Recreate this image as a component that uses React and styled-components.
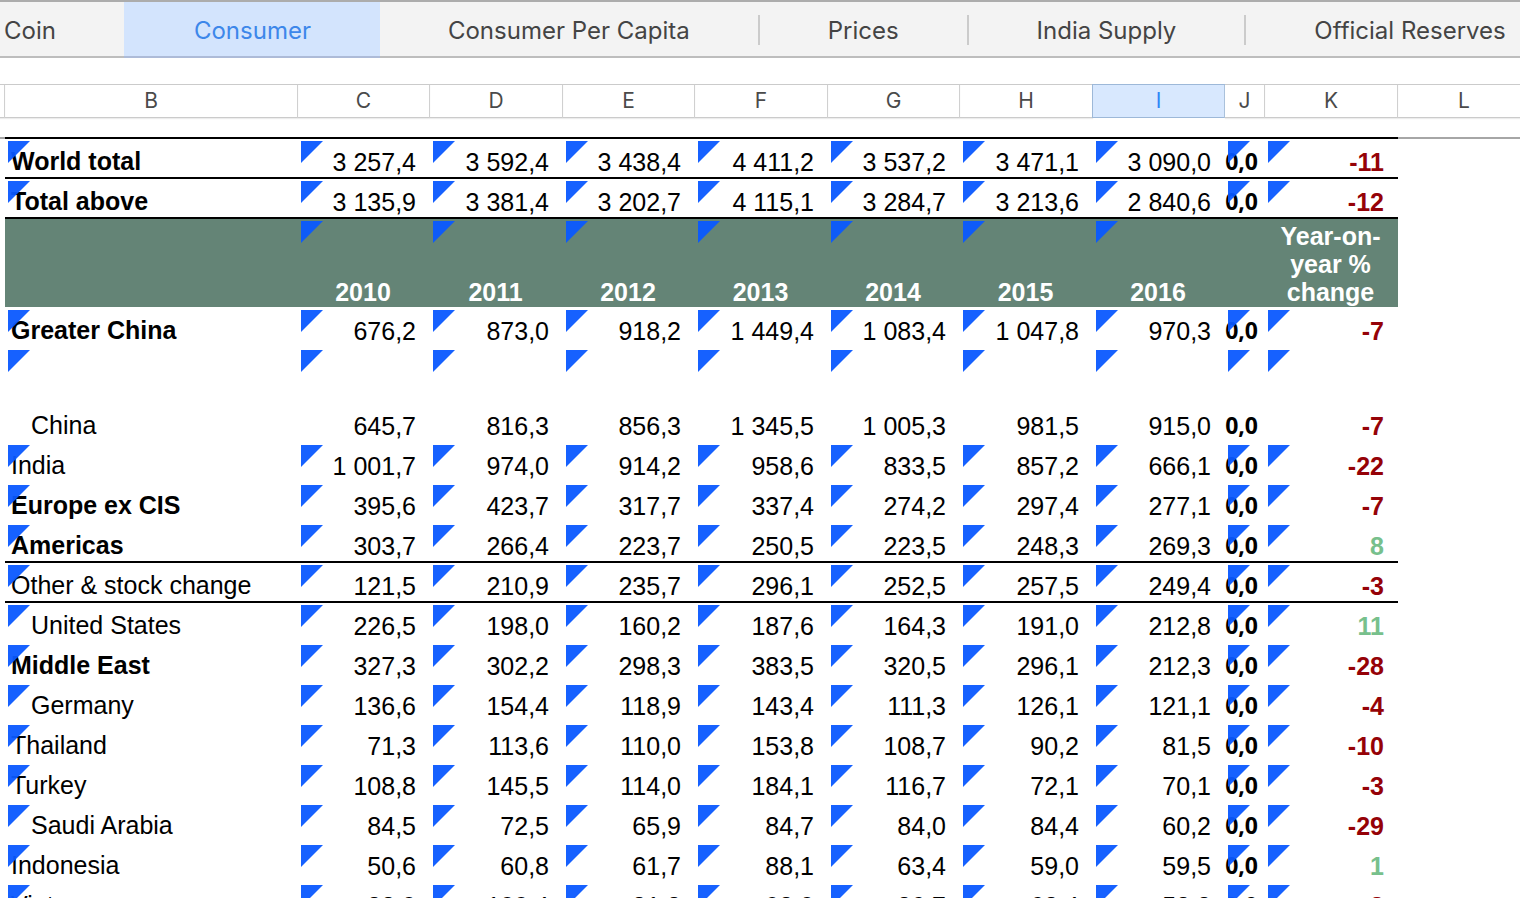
import React from "react";
import styled, { createGlobalStyle, css } from "styled-components";

const sheetFont = '"Liberation Sans", Arial, sans-serif';
const chromeFont = 'Inter, "Liberation Sans", sans-serif';

const GlobalStyle = createGlobalStyle`
  *, *::before, *::after { box-sizing: border-box; }
  html, body, #root { height: 100%; }
  body { margin: 0; background: #fff; overflow: hidden; }
`;

const Page = styled.div`
  display: flex;
  flex-direction: column;
  height: 100%;
  overflow: hidden;
`;

const TabBar = styled.nav`
  display: flex;
  flex: none;
  height: 58px;
  overflow: hidden;
  background: #f3f3f3;
  border-top: 2px solid #acacac;
  box-shadow: inset 0 -2px 0 #bdbdbd;
`;

const Tab = styled.button`
  display: flex;
  align-items: center;
  flex: none;
  height: 56px;
  margin: 0;
  padding: ${(p) => (p.$first ? "4px 68px 0 4px" : p.$active ? "4px 69px 0 70px" : "4px 68px 0")};
  border: 0;
  border-bottom: 2px solid ${(p) => (p.$active ? "#adbbd8" : "transparent")};
  background: ${(p) => (p.$active ? "#d3e4fd" : "transparent")};
  color: ${(p) => (p.$active ? "#3d87ea" : "#444")};
  font: 400 24px/50px ${chromeFont};
  white-space: nowrap;
`;

const TabDivider = styled.span`
  flex: none;
  align-self: center;
  width: 2px;
  height: 30px;
  background: #cbcbcb;
`;

const Sheet = styled.table`
  flex: none;
  width: 100%;
  min-width: 1531px;
  margin-top: 26px;
  table-layout: fixed;
  border-collapse: separate;
  border-spacing: 0;
  font: 400 25px/28px ${sheetFont};
  color: #000;
`;

const Col = styled.col`
  width: ${(p) => p.$w};
`;

const ColumnLetter = styled.th`
  height: 34px;
  padding: 0;
  border-top: 1px solid #cbcbcb;
  border-bottom: 1px solid #cbcbcb;
  border-right: 1px solid #cbcbcb;
  box-shadow: 0 1px 1px #ececec;
  color: #4a4a4a;
  font: 400 21px/32px ${chromeFont};
  text-align: center;
  ${(p) =>
    p.$active &&
    css`
      background: #d8e8fe;
      border-color: #9db8d8;
      color: #2f86f6;
      box-shadow: -1px 0 0 #9db8d8;
    `}
`;

const FreezeCell = styled.td`
  height: 21px;
  padding: 0;
  vertical-align: bottom;
  border-bottom: ${(p) => (p.$inside ? "2px solid #000" : "0")};
  box-shadow: ${(p) => (p.$inside ? "none" : "inset 0 -2px 0 #a6a6a6")};
`;

const Row = styled.tr`
  height: ${(p) => (p.$tall ? 95 : 40)}px;
`;

const cell = css`
  position: relative;
  vertical-align: bottom;
  white-space: nowrap;
  border-bottom: 2px solid ${(p) => (p.$ruled ? "#000" : "transparent")};
`;

const Label = styled.th`
  ${cell}
  padding: 0 0 2px ${(p) => (p.$indent ? 26 : 6)}px;
  text-align: left;
  font-weight: ${(p) => (p.$bold ? 700 : 400)};
`;

const Value = styled.td`
  ${cell}
  padding: 0 14px 1px 0;
  text-align: right;
`;

const Zero = styled.td`
  ${cell}
  padding: 0 7px 2px 0;
  text-align: right;
  font-family: "Open Sans", ${sheetFont};
  font-size: 23px;
  font-weight: 700;
`;

const Change = styled.td`
  ${cell}
  padding: 0 14px 1px 0;
  text-align: right;
  font-weight: 700;
  color: ${(p) => (p.$up ? "#77c08c" : "#950207")};
`;

const YearCell = styled.th`
  position: relative;
  height: 89px;
  padding: 0 2px 1px 0;
  vertical-align: bottom;
  text-align: center;
  background: #648476;
  border-bottom: 1px solid #fff;
  color: #fff;
  font-weight: 700;
`;

const Flag = styled.span`
  position: absolute;
  top: 2px;
  left: 3px;
  width: 22px;
  height: 22px;
  background: #0a59ff;
  opacity: 0.95;
  clip-path: polygon(0 0, 100% 0, 0 100%);
`;

const tabs = ["Coin", "Consumer", "Consumer Per Capita", "Prices", "India Supply", "Official Reserves"];
const letters = ["B", "C", "D", "E", "F", "G", "H", "I", "J", "K"];
const widths = ["5px", "293px", "132px", "133px", "132px", "133px", "132px", "133px", "132px", "40px", "133px", "auto"];
const years = ["2010", "2011", "2012", "2013", "2014", "2015", "2016"];

const totals = [
  { name: "World total", bold: true, ruled: true, v: "3 257,4|3 592,4|3 438,4|4 411,2|3 537,2|3 471,1|3 090,0", c: "-11" },
  { name: "Total above", bold: true, ruled: true, v: "3 135,9|3 381,4|3 202,7|4 115,1|3 284,7|3 213,6|2 840,6", c: "-12" },
];

const countries = [
  { name: "Greater China", bold: true, v: "676,2|873,0|918,2|1 449,4|1 083,4|1 047,8|970,3", c: "-7" },
  { name: "China", indent: true, tall: true, v: "645,7|816,3|856,3|1 345,5|1 005,3|981,5|915,0", c: "-7" },
  { name: "India", v: "1 001,7|974,0|914,2|958,6|833,5|857,2|666,1", c: "-22" },
  { name: "Europe ex CIS", bold: true, v: "395,6|423,7|317,7|337,4|274,2|297,4|277,1", c: "-7" },
  { name: "Americas", bold: true, ruled: true, v: "303,7|266,4|223,7|250,5|223,5|248,3|269,3", c: "8" },
  { name: "Other & stock change", ruled: true, v: "121,5|210,9|235,7|296,1|252,5|257,5|249,4", c: "-3" },
  { name: "United States", indent: true, v: "226,5|198,0|160,2|187,6|164,3|191,0|212,8", c: "11" },
  { name: "Middle East", bold: true, v: "327,3|302,2|298,3|383,5|320,5|296,1|212,3", c: "-28" },
  { name: "Germany", indent: true, v: "136,6|154,4|118,9|143,4|111,3|126,1|121,1", c: "-4" },
  { name: "Thailand", v: "71,3|113,6|110,0|153,8|108,7|90,2|81,5", c: "-10" },
  { name: "Turkey", v: "108,8|145,5|114,0|184,1|116,7|72,1|70,1", c: "-3" },
  { name: "Saudi Arabia", indent: true, v: "84,5|72,5|65,9|84,7|84,0|84,4|60,2", c: "-29" },
  { name: "Indonesia", v: "50,6|60,8|61,7|88,1|63,4|59,0|59,5", c: "1" },
  { name: "Vietnam", v: "82,0|100,4|81,8|98,0|86,7|63,4|58,2", c: "-8" },
];

function DataRow({ row }) {
  return (
    <Row $tall={row.tall}>
      <td />
      <Label scope="row" $bold={row.bold} $indent={row.indent} $ruled={row.ruled}>
        {row.name}
        <Flag />
      </Label>
      {row.v.split("|").map((v, i) => (
        <Value key={i} $ruled={row.ruled}>
          {v}
          <Flag />
        </Value>
      ))}
      <Zero $ruled={row.ruled}>
        0,0
        <Flag />
      </Zero>
      <Change $ruled={row.ruled} $up={!row.c.startsWith("-")}>
        {row.c}
        <Flag />
      </Change>
      <td />
    </Row>
  );
}

export default function App() {
  return (
    <Page>
      <GlobalStyle />
      <TabBar aria-label="Sheets">
        {tabs.map((name, i) => (
          <React.Fragment key={name}>
            {i > 2 && <TabDivider />}
            <Tab type="button" $first={i === 0} $active={name === "Consumer"}>
              {name}
            </Tab>
          </React.Fragment>
        ))}
      </TabBar>
      <Sheet>
        <colgroup>
          {widths.map((w, i) => (
            <Col key={i} $w={w} />
          ))}
        </colgroup>
        <thead>
          <tr>
            <ColumnLetter as="td" />
            {letters.map((l) => (
              <ColumnLetter key={l} scope="col" $active={l === "I"}>
                {l}
              </ColumnLetter>
            ))}
            <ColumnLetter scope="col">L</ColumnLetter>
          </tr>
          <tr>
            <FreezeCell />
            <FreezeCell colSpan={10} $inside />
            <FreezeCell />
          </tr>
        </thead>
        <tbody>
          {totals.map((row) => (
            <DataRow key={row.name} row={row} />
          ))}
          <tr>
            <td />
            <YearCell as="td" />
            {years.map((y) => (
              <YearCell key={y} scope="col">
                {y}
                <Flag />
              </YearCell>
            ))}
            <YearCell as="td" />
            <YearCell scope="col">
              Year-on-
              <br />
              year %
              <br />
              change
            </YearCell>
            <td />
          </tr>
          {countries.map((row) => (
            <DataRow key={row.name} row={row} />
          ))}
        </tbody>
      </Sheet>
    </Page>
  );
}
